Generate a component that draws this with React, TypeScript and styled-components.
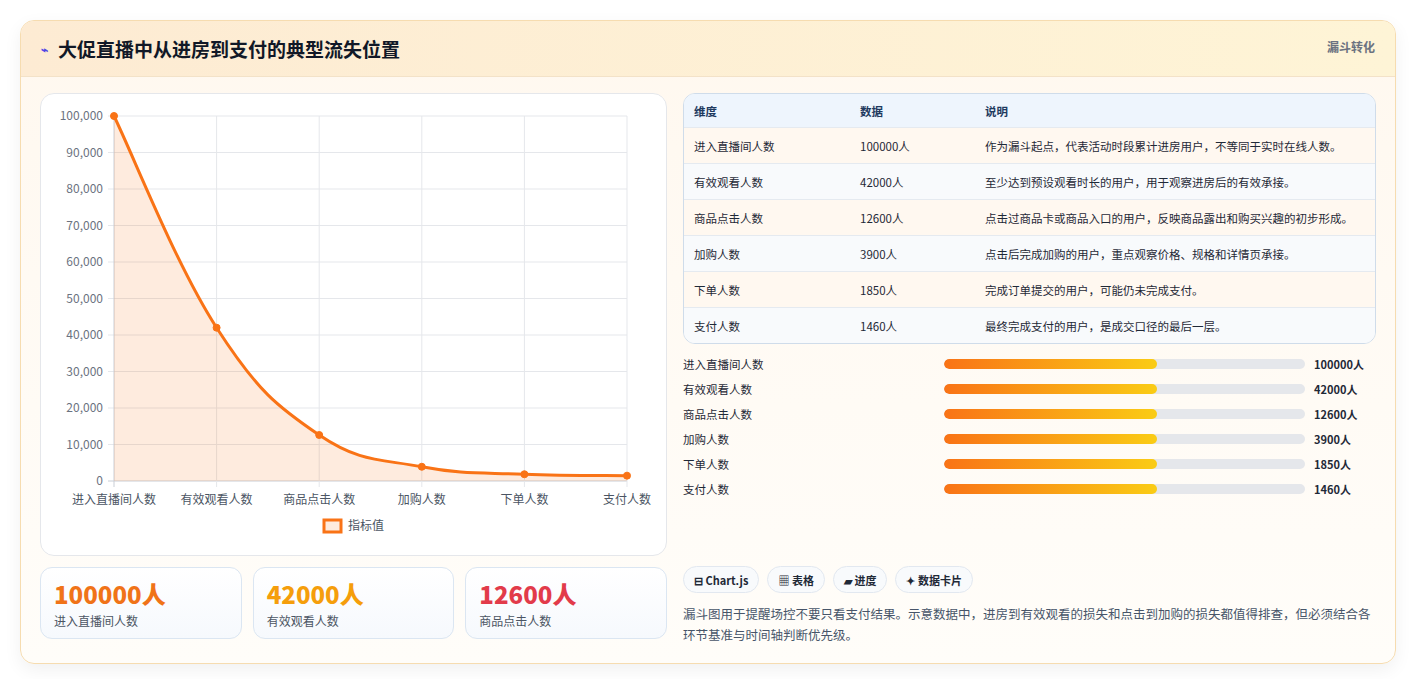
import React from "react";
import styled, { createGlobalStyle } from "styled-components";

const G = createGlobalStyle`
  body{margin:0;background:#fff;font-family:"Noto Sans CJK SC","Noto Sans",sans-serif;}
`;
const Page = styled.div`padding:20px 21px 22px 20px;`;
const Card = styled.div`
  border:1px solid #f6dcb0;border-radius:14px;overflow:hidden;
  background:linear-gradient(180deg,#fff8ef,#fffdf9);
  box-shadow:0 6px 18px rgba(0,0,0,0.06);
`;
const Header = styled.div`
  height:55px;display:flex;align-items:center;justify-content:space-between;
  padding:0 20px;background:linear-gradient(90deg,#fdebd3,#fef4d6);border-bottom:1px solid #f3e2c8;
`;
const Title = styled.h1`margin:0;font-size:19px;font-weight:700;color:#111827;display:flex;align-items:center;gap:10px;`;
const Icon = styled.span`color:#4f46e5;font-size:12px;`;
const Tag = styled.span`font-size:12px;font-weight:700;color:#6b7280;align-self:flex-start;margin-top:17px;`;
const Body = styled.div`display:grid;grid-template-columns:627px 1fr;gap:16px;padding:16px 19px 18px 19px;`;
const Col = styled.div`display:flex;flex-direction:column;`;
const ChartPanel = styled.div`height:461px;background:#fff;border:1px solid #e5e7eb;border-radius:14px;overflow:hidden;`;
const Stats = styled.div`display:grid;grid-template-columns:repeat(3,1fr);gap:11px;margin-top:11px;`;
const Stat = styled.div`height:72px;box-sizing:border-box;border:1px solid #dbe6f2;border-radius:12px;background:linear-gradient(180deg,#fff,#f6f9fd);padding:10px 13px;`;
const StatNum = styled.div<{c:string}>`font-size:24px;font-weight:800;color:${p=>p.c};line-height:32px;`;
const StatLbl = styled.div`font-size:12px;color:#4b5563;margin-top:2px;`;
const Table = styled.div`border:1px solid #cfdcea;border-radius:12px;overflow:hidden;background:#fff;`;
const Row = styled.div<{bg:string;h:number}>`
  display:grid;grid-template-columns:166px 125px 1fr;height:${p=>p.h}px;align-items:center;
  padding-left:10px;background:${p=>p.bg};border-top:1px solid #e5eaf0;font-size:11.5px;color:#1f2937;
  &:first-child{border-top:none;font-weight:700;color:#1e3a5f;}
`;
const Bars = styled.div`display:flex;flex-direction:column;gap:7px;margin-top:11px;`;
const BarRow = styled.div`display:grid;grid-template-columns:261px 361px 1fr;gap:0;align-items:center;height:18px;font-size:11.5px;color:#1f2937;`;
const Track = styled.div`height:10px;border-radius:5px;background:#e5e7eb;overflow:hidden;`;
const Fill = styled.div`height:100%;border-radius:5px;background:linear-gradient(90deg,#f97316,#facc15);`;
const Val = styled.span`padding-left:9px;font-weight:700;font-size:11px;`;
const Chips = styled.div`display:flex;gap:8px;margin-top:68px;`;
const Chip = styled.span`height:27px;box-sizing:border-box;padding:0 10px;border:1px solid #e2e8f0;border-radius:14px;background:#f8fafc;font-size:11px;font-weight:700;color:#1f2937;display:flex;align-items:center;gap:3px;`;
const Note = styled.p`margin:10px 0 0;font-size:12.5px;line-height:21px;color:#475569;`;

const labels=["进入直播间人数","有效观看人数","商品点击人数","加购人数","下单人数","支付人数"];
const vals=[100000,42000,12600,3900,1850,1460];
const desc=["作为漏斗起点，代表活动时段累计进房用户，不等同于实时在线人数。","至少达到预设观看时长的用户，用于观察进房后的有效承接。","点击过商品卡或商品入口的用户，反映商品露出和购买兴趣的初步形成。","点击后完成加购的用户，重点观察价格、规格和详情页承接。","完成订单提交的用户，可能仍未完成支付。","最终完成支付的用户，是成交口径的最后一层。"];

function Chart(){
  const x0=73,x1=586,y0=22,y1=387;
  const xs=vals.map((_,i)=>x0+i*(x1-x0)/5);
  const ys=vals.map(v=>y1-v/100000*(y1-y0));
  let d=`M${xs[0]},${ys[0]}`;
  for(let i=0;i<5;i++){
    const p0=[xs[Math.max(0,i-1)],ys[Math.max(0,i-1)]],p1=[xs[i],ys[i]],p2=[xs[i+1],ys[i+1]],p3=[xs[Math.min(5,i+2)],ys[Math.min(5,i+2)]];
    const t=0.4/2*1;
    const c1=[p1[0]+(p2[0]-p0[0])*t,p1[1]+(p2[1]-p0[1])*t];
    const c2=[p2[0]-(p3[0]-p1[0])*t,p2[1]-(p3[1]-p1[1])*t];
    d+=` C${c1[0]},${Math.min(c1[1],y1)} ${c2[0]},${Math.min(c2[1],y1)} ${p2[0]},${p2[1]}`;
  }
  const ticks=[0,1,2,3,4,5,6,7,8,9,10];
  return <svg width="627" height="461" fontFamily="'Noto Sans CJK SC',sans-serif">
    {ticks.map(t=>{const y=y1-t*(y1-y0)/10;return <g key={t}><line x1={x0-6} x2={x1} y1={y} y2={y} stroke={t===0?"#c9ced6":"#e5e7eb"}/><text x={x0-11} y={y+4} fontSize="12" fill="#6b7280" textAnchor="end">{(t*10000).toLocaleString("en-US")}</text></g>})}
    {xs.map((x,i)=><g key={i}><line x1={x} x2={x} y1={y0} y2={y1+6} stroke={i===0?"#c9ced6":"#e5e7eb"}/><text x={x} y={410} fontSize="12" fill="#4b5563" textAnchor="middle">{labels[i]}</text></g>)}
    <path d={`${d} L${x1},${y1} L${x0},${y1} Z`} fill="rgba(249,115,22,0.14)"/>
    <path d={d} fill="none" stroke="#f97316" strokeWidth="3"/>
    {xs.map((x,i)=><circle key={i} cx={x} cy={ys[i]} r="3.5" fill="#f97316" stroke="#f97316"/>)}
    <rect x="283" y="426" width="17" height="12" fill="rgba(249,115,22,0.14)" stroke="#f97316" strokeWidth="3"/>
    <text x="307" y="436" fontSize="12" fill="#4b5563">指标值</text>
  </svg>;
}

export default function App(){
  return <Page><G/><Card>
    <Header><Title><Icon>⌁</Icon>大促直播中从进房到支付的典型流失位置</Title><Tag>漏斗转化</Tag></Header>
    <Body>
      <Col>
        <ChartPanel><Chart/></ChartPanel>
        <Stats>
          <Stat><StatNum c="#f07318">100000人</StatNum><StatLbl>进入直播间人数</StatLbl></Stat>
          <Stat><StatNum c="#f59e0b">42000人</StatNum><StatLbl>有效观看人数</StatLbl></Stat>
          <Stat><StatNum c="#e23b4a">12600人</StatNum><StatLbl>商品点击人数</StatLbl></Stat>
        </Stats>
      </Col>
      <Col>
        <Table>
          <Row bg="#eef5fd" h={33}><span>维度</span><span>数据</span><span>说明</span></Row>
          {labels.map((l,i)=><Row key={l} bg={i%2===0?"#fff8f0":"#f8fafc"} h={35}><span>{l}</span><span>{vals[i]}人</span><span>{desc[i]}</span></Row>)}
        </Table>
        <Bars>
          {labels.map((l,i)=><BarRow key={l}><span>{l}</span><Track><Fill style={{width:"59%"}}/></Track><Val>{vals[i]}人</Val></BarRow>)}
        </Bars>
        <Chips><Chip>⊟ Chart.js</Chip><Chip>▦ 表格</Chip><Chip>▰ 进度</Chip><Chip>✦ 数据卡片</Chip></Chips>
        <Note>漏斗图用于提醒场控不要只看支付结果。示意数据中，进房到有效观看的损失和点击到加购的损失都值得排查，但必须结合各环节基准与时间轴判断优先级。</Note>
      </Col>
    </Body>
  </Card></Page>;
}
